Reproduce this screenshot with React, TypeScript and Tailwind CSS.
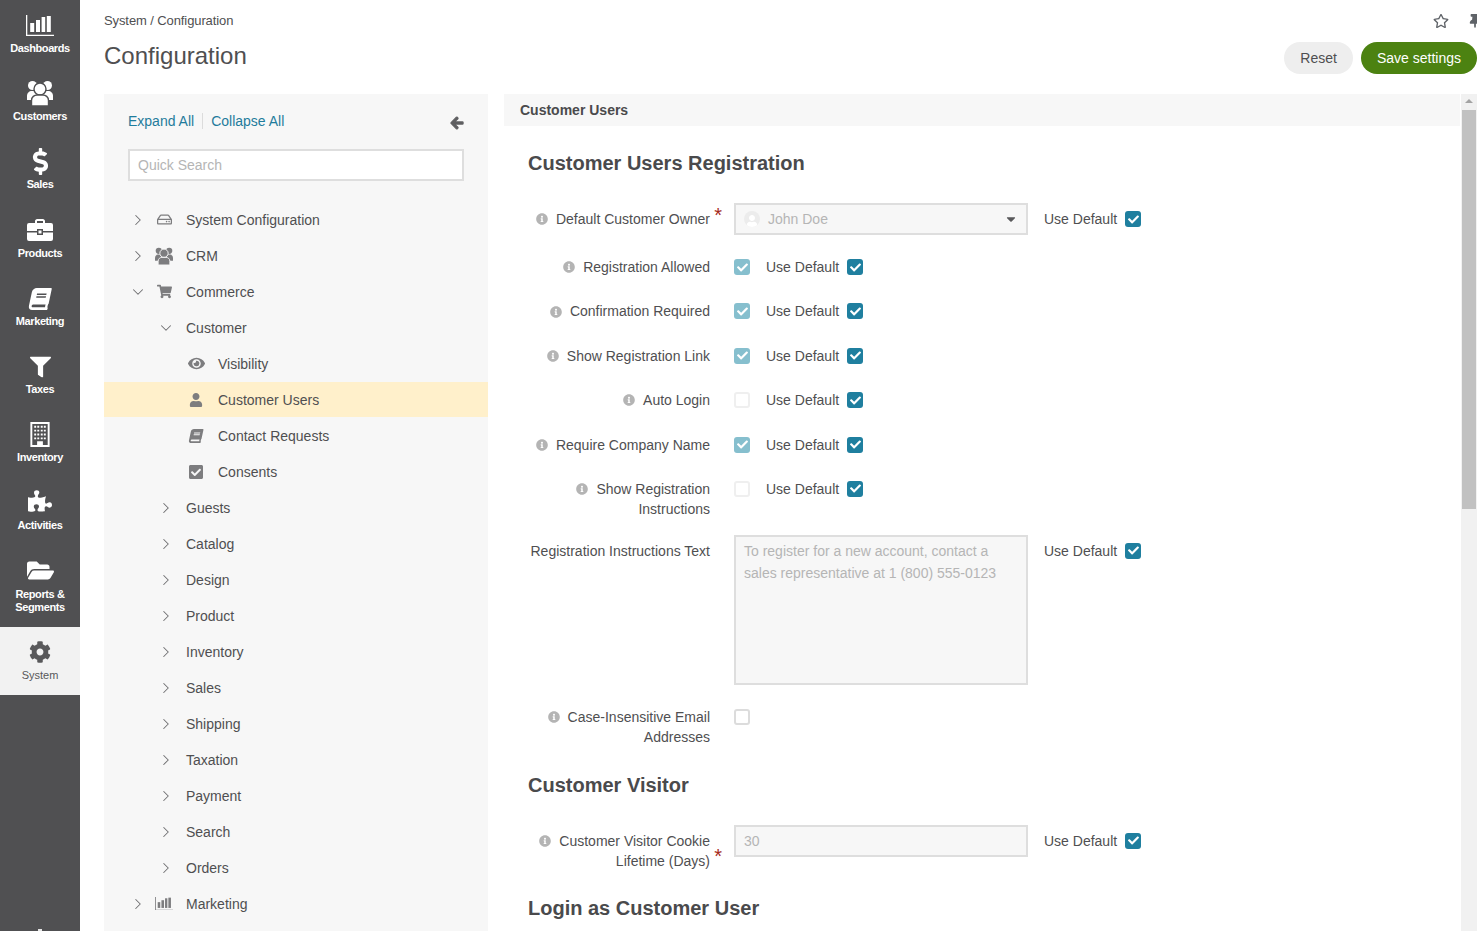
import type { ReactNode } from 'react';
import { ChevronDown, ChevronRight } from 'lucide-react';
import {
  FaArrowLeft,
  FaBook,
  FaCaretDown,
  FaCheck,
  FaCheckSquare,
  FaCog,
  FaDollarSign,
  FaEye,
  FaFilter,
  FaFolderOpen,
  FaInfoCircle,
  FaPuzzlePiece,
  FaRegHdd,
  FaRegStar,
  FaShoppingCart,
  FaThumbtack,
  FaUser,
} from 'react-icons/fa';

function BarsIcon({ width = 28 }: { width?: number }) {
  return (
    <svg width={width} height={(width * 21) / 28} viewBox="0 0 28 21" fill="currentColor">
      <path d="M0 0h1.3v19.7H28V21H0z" />
      <rect x="4.2" y="8" width="4" height="9" />
      <rect x="10" y="5" width="4" height="12" />
      <rect x="15.6" y="2" width="3.6" height="15" />
      <rect x="20.8" y="1" width="4" height="16" />
    </svg>
  );
}

function PeopleIcon({ size = 26, cut }: { size?: number; cut: string }) {
  return (
    <svg width={size} height={size} viewBox="0 0 26 26" fill="currentColor">
      <circle cx="5.5" cy="5.5" r="4.5" />
      <circle cx="20.5" cy="5.5" r="4.5" />
      <path d="M0 20v-4c0-3 2-5 5-5h16c3 0 5 2 5 5v4z" />
      <circle cx="13" cy="9" r="6" stroke={cut} strokeWidth="1.4" />
      <path
        d="M4.5 26v-5.5c0-3.6 3-5.5 5.5-5.5h6c2.5 0 5.5 1.9 5.5 5.5V26z"
        stroke={cut}
        strokeWidth="1.4"
      />
    </svg>
  );
}

function CaseIcon() {
  return (
    <svg width="26" height="22" viewBox="0 0 26 22" fill="currentColor">
      <path d="M8 5V2.2C8 1 9 0 10.2 0h5.6C17 0 18 1 18 2.2V5h-2V2h-6v3z" />
      <path d="M2 4h22a2 2 0 0 1 2 2v6H16v-2h-6v2H0V6a2 2 0 0 1 2-2z" />
      <path d="M0 13.5h10V16h6v-2.5h10V20a2 2 0 0 1-2 2H2a2 2 0 0 1-2-2z" />
      <rect x="11.5" y="11.5" width="3" height="3" />
    </svg>
  );
}

function InventoryIcon() {
  return (
    <svg width="20" height="25" viewBox="0 0 20 26" fill="currentColor">
      <path fillRule="evenodd" d="M0 0h20v26H0zM2 2v22h5v-4h6v4h5V2z" />
      <path d="M4 4h2v2H4zM7.2 4h2v2h-2zM10.8 4h2v2h-2zM14 4h2v2h-2zM4 8h2v2H4zM7.2 8h2v2h-2zM10.8 8h2v2h-2zM14 8h2v2h-2zM4 12h2v2H4zM7.2 12h2v2h-2zM10.8 12h2v2h-2zM14 12h2v2h-2zM4 16h2v2H4zM7.2 16h2v2h-2zM10.8 16h2v2h-2zM14 16h2v2h-2z" />
    </svg>
  );
}

const navItems: { label: string; icon: ReactNode; tall?: boolean; active?: boolean }[] = [
  { label: 'Dashboards', icon: <BarsIcon /> },
  { label: 'Customers', icon: <PeopleIcon cut="#505052" /> },
  { label: 'Sales', icon: <FaDollarSign size={27} /> },
  { label: 'Products', icon: <CaseIcon /> },
  { label: 'Marketing', icon: <FaBook size={22} className="translate-y-px -skew-x-12" /> },
  { label: 'Taxes', icon: <FaFilter size={21} className="translate-y-[1.5px]" /> },
  { label: 'Inventory', icon: <InventoryIcon /> },
  { label: 'Activities', icon: <FaPuzzlePiece size={24} className="-translate-y-px" /> },
  { label: 'Reports & Segments', icon: <FaFolderOpen size={27} />, tall: true },
  { label: 'System', icon: <FaCog size={22} />, active: true },
];

function Sidebar() {
  return (
    <aside className="flex h-[931px] w-20 shrink-0 flex-col overflow-hidden bg-[#505052]">
      {navItems.map((item) => (
        <div
          key={item.label}
          className={`flex shrink-0 flex-col items-center pt-[10px] text-center text-[11px] leading-[13px] ${
            item.tall ? 'h-[81.4px]' : item.active ? 'h-[68px]' : 'h-[68.2px]'
          } ${item.active ? 'bg-[#f2f2f2] font-normal text-[#58585a]' : 'font-bold tracking-[-0.4px] text-white'}`}
        >
          <div className="mb-0.5 flex h-[30px] shrink-0 items-center justify-center">{item.icon}</div>
          <span className="w-[72px]">{item.label}</span>
        </div>
      ))}
      <span className="mx-auto mt-[234px] h-0.5 w-1 shrink-0 bg-[#e6e6e6]" />
    </aside>
  );
}

interface TreeRowProps {
  label: string;
  level: 0 | 1 | 2;
  open?: boolean;
  icon?: ReactNode;
  selected?: boolean;
}

const treeRows: TreeRowProps[] = [
  { label: 'System Configuration', level: 0, icon: <FaRegHdd size={15} /> },
  { label: 'CRM', level: 0, icon: <PeopleIcon size={18} cut="#f7f7f7" /> },
  { label: 'Commerce', level: 0, open: true, icon: <FaShoppingCart size={15} /> },
  { label: 'Customer', level: 1, open: true },
  { label: 'Visibility', level: 2, icon: <FaEye size={17} /> },
  { label: 'Customer Users', level: 2, icon: <FaUser size={14} />, selected: true },
  { label: 'Contact Requests', level: 2, icon: <FaBook size={14} className="-skew-x-12" /> },
  { label: 'Consents', level: 2, icon: <FaCheckSquare size={16} /> },
  { label: 'Guests', level: 1 },
  { label: 'Catalog', level: 1 },
  { label: 'Design', level: 1 },
  { label: 'Product', level: 1 },
  { label: 'Inventory', level: 1 },
  { label: 'Sales', level: 1 },
  { label: 'Shipping', level: 1 },
  { label: 'Taxation', level: 1 },
  { label: 'Payment', level: 1 },
  { label: 'Search', level: 1 },
  { label: 'Orders', level: 1 },
  { label: 'Marketing', level: 0, icon: <BarsIcon width={18} /> },
];

function TreeRow({ label, level, open, icon, selected }: TreeRowProps) {
  const Chevron = open ? ChevronDown : ChevronRight;
  return (
    <div
      className={`flex h-9 shrink-0 items-center border-b border-[#f7f7f7] ${selected ? 'bg-[#fff0cb]' : ''}`}
    >
      {level === 0 && (
        <>
          <span className="ml-[27px] flex w-[14px] justify-center text-[#6f6f71]">
            <Chevron size={18} strokeWidth={1.4} className="shrink-0" />
          </span>
          <span className="ml-[7px] flex w-6 justify-center text-[#7d7d7f]">{icon}</span>
          <span className="ml-[10px]">{label}</span>
        </>
      )}
      {level === 1 && (
        <>
          <span className="ml-[55px] flex w-[14px] justify-center text-[#6f6f71]">
            <Chevron size={18} strokeWidth={1.4} className="shrink-0" />
          </span>
          <span className="ml-[13px]">{label}</span>
        </>
      )}
      {level === 2 && (
        <>
          <span className="ml-[80px] flex w-6 justify-center text-[#7d7d7f]">{icon}</span>
          <span className="ml-[10px]">{label}</span>
        </>
      )}
    </div>
  );
}

function TreePanel() {
  return (
    <section className="flex h-[837px] w-[384px] shrink-0 flex-col overflow-hidden bg-[#f7f7f7]">
      <div className="flex items-center pl-6 pr-[24px] pt-[17px] leading-5 text-[#1f7c9c]">
        <span>Expand All</span>
        <span className="mx-2 h-4 w-px bg-[#dcdcdc]" />
        <span>Collapse All</span>
        <FaArrowLeft size={14} stroke="currentColor" strokeWidth={40} className="ml-auto mt-1 text-[#5f5f61]" />
      </div>
      <div className="mx-6 mt-[18px] flex h-8 w-[336px] shrink-0 items-center border-2 border-[#dedede] bg-white px-2 text-[#b5b5b5]">
        Quick Search
      </div>
      <div className="mt-[21px] flex flex-col">
        {treeRows.map((row) => (
          <TreeRow key={row.label + row.level} {...row} />
        ))}
      </div>
    </section>
  );
}

function Check({ on, muted, outlined }: { on?: boolean; muted?: boolean; outlined?: boolean }) {
  if (!on) {
    return (
      <span
        className={`block size-4 shrink-0 rounded-[3px] border-2 bg-white ${
          outlined ? 'border-[#dcdcdc]' : 'border-[#efefef]'
        }`}
      />
    );
  }
  return (
    <span
      className={`flex size-4 shrink-0 items-center justify-center rounded-[3px] text-white ${
        muted ? 'bg-[#86bfce]' : 'bg-[#1f7f9f]'
      }`}
    >
      <FaCheck size={11} />
    </span>
  );
}

function UseDefault() {
  return (
    <div className="flex items-center gap-2">
      <span>Use Default</span>
      <Check on />
    </div>
  );
}

function InfoDot() {
  return <FaInfoCircle size={12} className="mr-2 inline-block -translate-y-px align-middle text-[#b4b4b4]" />;
}

function FieldLabel({ children }: { children: ReactNode }) {
  return (
    <div className="w-[182px] shrink-0 text-right leading-5">
      <InfoDot />
      {children}
    </div>
  );
}

function Star({ className }: { className: string }) {
  return <span className={`absolute text-[20px] leading-5 text-[#a52a1a] ${className}`}>*</span>;
}

function CheckRow({ label, on, last }: { label: ReactNode; on?: boolean; last?: boolean }) {
  return (
    <div className={`flex items-start gap-6 ${last ? 'mb-4' : 'mb-[24.4px]'}`}>
      <FieldLabel>{label}</FieldLabel>
      <div className="flex h-5 items-center gap-4">
        <Check on={on} muted />
        <UseDefault />
      </div>
    </div>
  );
}

function Heading({ children, className }: { children: ReactNode; className: string }) {
  return <h2 className={`text-[20px] leading-6 font-bold text-[#4a4a4c] ${className}`}>{children}</h2>;
}

function SettingsPanel() {
  return (
    <section className="flex h-[837px] min-w-0 flex-1 overflow-hidden">
      <div className="w-[956px] shrink-0">
        <div className="flex h-8 items-center bg-[#f7f7f7] pl-4 font-bold text-[#4a4a4c]">Customer Users</div>
        <div className="pl-6">
          <Heading className="mt-[25px] mb-[28px]">Customer Users Registration</Heading>

          <div className="mb-[22px] flex items-center gap-6">
            <div className="relative w-[182px] shrink-0 text-right leading-5">
              <InfoDot />
              Default Customer Owner
              <Star className="top-[-4px] -right-[12px]" />
            </div>
            <div className="flex h-8 w-[294px] shrink-0 items-center border-2 border-[#dedede] bg-[#f7f7f7] px-2 text-[#b5b5b5]">
              <span className="mr-2 flex size-4 items-end justify-center overflow-hidden rounded-full bg-[#ececec] text-white">
                <FaUser size={12} />
              </span>
              John Doe
              <FaCaretDown size={14} className="ml-auto text-[#58585a]" />
            </div>
            <div className="-ml-2">
              <UseDefault />
            </div>
          </div>

          <CheckRow label="Registration Allowed" on />
          <CheckRow label="Confirmation Required" on />
          <CheckRow label="Show Registration Link" on />
          <CheckRow label="Auto Login" />
          <CheckRow label="Require Company Name" on />
          <CheckRow label={<>Show Registration<br />Instructions</>} last />

          <div className="mb-[22px] flex items-start gap-6">
            <div className="w-[182px] shrink-0 pt-1.5 text-right leading-5">Registration Instructions Text</div>
            <div className="h-[150px] w-[294px] shrink-0 border-2 border-[#dedede] bg-[#f7f7f7] px-2 pt-[3px] text-[#b5b5b5]">
              <p className="leading-[22px]">
                To register for a new account, contact a
                <br />
                sales representative at 1 (800) 555-0123
              </p>
            </div>
            <div className="-ml-2 pt-1.5">
              <UseDefault />
            </div>
          </div>

          <div className="flex items-start gap-6">
            <FieldLabel>Case-Insensitive Email<br />Addresses</FieldLabel>
            <div className="flex h-5 items-center">
              <Check outlined />
            </div>
          </div>

          <Heading className="mt-[26px] mb-[28px]">Customer Visitor</Heading>

          <div className="flex items-start gap-6">
            <div className="relative w-[182px] shrink-0 pt-1.5 text-right leading-5">
              <InfoDot />
              Customer Visitor Cookie
              <br />
              Lifetime (Days)
              <Star className="top-[21px] -right-[12px]" />
            </div>
            <div className="flex h-8 w-[294px] shrink-0 items-center border-2 border-[#dedede] bg-[#f7f7f7] px-2 text-[#b5b5b5]">
              30
            </div>
            <div className="-ml-2 pt-1.5">
              <UseDefault />
            </div>
          </div>

          <Heading className="mt-[25px]">Login as Customer User</Heading>
        </div>
      </div>
      <div className="ml-px flex w-4 shrink-0 flex-col items-center bg-[#f1f1f1] pt-[5px]">
        <span className="mb-[7px] h-0 w-0 border-x-4 border-b-4 border-x-transparent border-b-[#a3a3a3]" />
        <span className="h-[399px] w-3.5 bg-[#c1c1c1]" />
      </div>
    </section>
  );
}

export default function App() {
  return (
    <div className="flex h-[931px] w-full overflow-hidden bg-white font-['Liberation_Sans',Arial,sans-serif] text-sm text-[#4f4f51]">
      <Sidebar />
      <main className="ml-6 flex w-[1373px] shrink-0 flex-col overflow-hidden">
        <header className="relative h-[94px] shrink-0">
          <div className="pt-[13px] text-[13px] leading-4 tracking-[-0.1px]">System / Configuration</div>
          <h1 className="mt-[11px] text-2xl leading-8 font-normal">Configuration</h1>
          <div className="absolute top-[13px] right-0 flex items-center gap-[19px] text-[#5f6368]">
            <FaRegStar size={16} />
            <span className="w-[9px] overflow-hidden">
              <FaThumbtack size={14} />
            </span>
          </div>
          <div className="absolute top-[42px] right-0 flex gap-2">
            <span className="flex h-8 items-center rounded-full bg-[#eeeeee] px-4">Reset</span>
            <span className="flex h-8 items-center rounded-full bg-[#4c8211] px-4 text-white">Save settings</span>
          </div>
        </header>
        <div className="flex gap-4">
          <TreePanel />
          <SettingsPanel />
        </div>
      </main>
    </div>
  );
}
